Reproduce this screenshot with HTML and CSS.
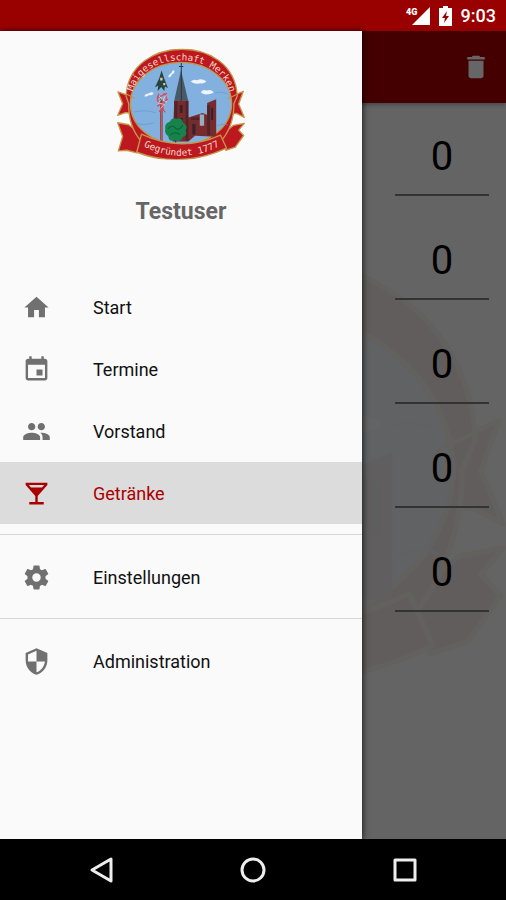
FILE: index.html
```
<!DOCTYPE html>
<html lang="de">
<head>
    <meta charset="UTF-8">
    <title>Maigesellschaft Merken</title>
    <meta name="viewport" content="width=device-width, initial-scale=1.0">
    <link rel="stylesheet" href="styles.css">
</head>
<body>
    <!-- Wappen, wird im Menü und als Hintergrund verwendet -->
    <svg class="defs" width="0" height="0" aria-hidden="true">
        <symbol id="wappen" viewBox="25 40 382 332">
            <g stroke="#c4964a" stroke-width="4" stroke-linejoin="round">
                <path fill="#bd1820" d="M28 170 L62 182 L72 232 L50 232 L27 240 L42 205Z"/>
                <path fill="#bd1820" d="M402 168 L370 182 L360 235 L382 234 L405 246 L388 206Z"/>
                <path fill="#bd1820" d="M27 262 L60 268 L100 300 L84 352 L54 344 L29 346 L42 303Z"/>
                <path fill="#bd1820" d="M405 264 L372 270 L335 300 L350 344 L378 335 L403 300 L388 284Z"/>
                <path fill="#bd1820" d="M52 182 C62 -2 374 -6 384 182 L374 205 C374 292 318 368 216 369 C112 368 58 290 60 205Z"/>
                <ellipse cx="216" cy="205" rx="151" ry="123" fill="#83b1df"/>
            </g>
            <g fill="#eef4fa">
                <path d="M106 183q5-10 14-8q8-7 14-2q-3 9-13 6q-7 6-15 4z"/>
                <path d="M178 126q2-11 9-12q2-9 9-9q2 10-7 12q-2 10-11 9z"/>
                <path d="M245 139q8-8 19-4q12-7 28 3q-8 9-19 6q-14 5-28-5z"/>
                <path d="M275 171q7-10 18-5q14-5 21 6q-10 6-20 5q-12 2-19-6z"/>
            </g>
            <path fill="none" stroke="#6598c7" stroke-width="2" d="M75 230q35-8 65 2M82 265q30 5 54-3M318 172q20-5 37 3M325 270q15-6 30-2"/>
            <path fill="#5d4738" d="M154 190h7v128h-7z"/>
            <path fill="none" stroke="#d94a57" stroke-width="4" d="M150 175q-10 20 3 29t-2 25M164 174q15 12 3 27t2 30M146 187l28-13M145 213l32-22M158 220v95"/>
            <path fill="none" stroke="#f6dfe3" stroke-width="2" d="M150 182l10 9-12 12 18 4-12 13M171 180l-9 15 12 6"/>
            <path fill="#28443c" d="M158 106 L166 130 L177 158 L168 154 L166 167 L157 155 L146 168 L148 151 L138 157 L151 129Z"/>
            <path fill="#d4d3bc" d="M154 128h7v8h-7zM163 143h6v7h-6z"/>
            <path fill="#772b2d" d="M196 195h42v51l43-13 13 6v-36l27-11v112l-63-3-20 17h-47z"/>
            <path fill="#4f2529" d="M196 197h9v113h-9zM230 197h8v118h-8zM294 210h9v89h-9zM246 246h35v8h-35z"/>
            <path fill="#495967" d="M216 105 L237 195 H196Z"/>
            <path fill="none" stroke="#293947" stroke-width="3" d="M217 84v113M210 94h13"/>
            <path fill="#32242a" d="M212 209h9v24h-9zM213 248h9v25h-9zM250 266h9v31h-9zM306 217h6v37h-6z"/>
            <path fill="#96afc1" d="M272 237h13v34h-13z"/>
            <path stroke="#4b302f" stroke-width="3" d="M200 290v32"/>
            <path fill="#16834d" d="M169 279q-3-15 14-21q7-14 21-8q16-3 18 12q16 9 8 22q7 14-8 20q-8 18-24 10q-18 7-20-12q-12-7-9-23z"/>
            <path fill="none" stroke="#096039" stroke-width="3" d="M177 280q12-14 22-3t23-8M184 299q13-13 29-2"/>
            <path fill="#bd1820" stroke="#c4964a" stroke-width="4" stroke-linejoin="round" d="M98 296 Q216 352 334 299 L352 338 Q216 400 84 350Z"/>
            <path fill="none" stroke="#c4964a" stroke-width="3" d="M54 177l24 12M355 191l28-14"/>
        </symbol>
    </svg>

    <header class="statusbar">
        <svg class="signal" width="24" height="20" viewBox="0 0 24 20" fill="#fff">
            <path d="M6 19L24 1v18z"/>
            <text class="network" x="0" y="9">4G</text>
        </svg>
        <svg width="13" height="20" viewBox="0 0 13 20" fill="#fff">
            <path fill-rule="evenodd" d="M4 0h5v2h4v18H0V2h4zM8 5L3 12h3l-1 5 5-7H7z"/>
        </svg>
        <span class="clock">9:03</span>
    </header>

    <div class="screen">
        <main class="page">
            <div class="toolbar">
                <button class="delete" type="button" aria-label="Löschen">
                    <svg width="30" height="30" viewBox="0 0 24 24"><path d="M6 19c0 1.1.9 2 2 2h8c1.1 0 2-.9 2-2V7H6v12zM19 4h-3.500l-1-1h-5l-1 1H5v2h14V4z"/></svg>
                </button>
            </div>
            <div class="drinks">
                <svg class="watermark" viewBox="0 0 382 332" aria-hidden="true"><use href="#wappen" width="382" height="332"/></svg>
                <input class="amount" type="text" inputmode="numeric" value="0" aria-label="Getränk 1">
                <input class="amount" type="text" inputmode="numeric" value="0" aria-label="Getränk 2">
                <input class="amount" type="text" inputmode="numeric" value="0" aria-label="Getränk 3">
                <input class="amount" type="text" inputmode="numeric" value="0" aria-label="Getränk 4">
                <input class="amount" type="text" inputmode="numeric" value="0" aria-label="Getränk 5">
            </div>
        </main>

        <div class="scrim"></div>

        <aside class="drawer">
            <div class="profile">
                <svg class="logo" viewBox="25 40 382 332">
                    <use href="#wappen" x="25" y="40" width="382" height="332"/>
                    <path id="arc-top" fill="none" d="M69 190 C82 38 350 36 365 192"/>
                    <path id="arc-bottom" fill="none" d="M90 324 Q216 397 346 324"/>
                    <text class="wappen-text"><textPath href="#arc-top" startOffset="50%">Maigesellschaft Merken</textPath></text>
                    <text class="wappen-text"><textPath href="#arc-bottom" startOffset="50%">Gegründet 1777</textPath></text>
                </svg>
                <h1 class="username">Testuser</h1>
            </div>
            <nav class="menu">
                <a class="item" href="#start">
                    <svg class="icon" viewBox="0 0 24 24"><path d="M10 20v-6h4v6h5v-8h3L12 3 2 12h3v8z"/></svg>
                    Start
                </a>
                <a class="item" href="#termine">
                    <svg class="icon" viewBox="0 0 24 24"><path d="M17 12h-5v5h5v-5zM16 1v2H8V1H6v2H5c-1.110 0-1.990.9-1.990 2L3 19c0 1.100.890 2 2 2h14c1.100 0 2-.9 2-2V5c0-1.100-.9-2-2-2h-1V1h-2zm3 18H5V8h14v11z"/></svg>
                    Termine
                </a>
                <a class="item" href="#vorstand">
                    <svg class="icon" viewBox="0 0 24 24"><path d="M16 11c1.660 0 2.990-1.340 2.990-3S17.660 5 16 5c-1.660 0-3 1.340-3 3s1.340 3 3 3zm-8 0c1.660 0 2.990-1.340 2.990-3S9.660 5 8 5C6.340 5 5 6.340 5 8s1.340 3 3 3zm0 2c-2.330 0-7 1.170-7 3.500V19h14v-2.500c0-2.330-4.670-3.500-7-3.500zm8 0c-.290 0-.620.020-.970.050 1.160.840 1.970 1.970 1.970 3.450V19h6v-2.500c0-2.330-4.670-3.500-7-3.500z"/></svg>
                    Vorstand
                </a>
                <a class="item active" href="#getraenke">
                    <svg class="icon" viewBox="0 0 24 24"><path d="M21 5V3H3v2l8 9v5H6v2h12v-2h-5v-5l8-9zM7.430 7L5.660 5h12.690l-1.780 2H7.430z"/></svg>
                    Getränke
                </a>
                <hr class="divider">
                <a class="item" href="#einstellungen">
                    <svg class="icon" viewBox="0 0 24 24"><path d="M19.430 12.980c.040-.320.070-.640.070-.980s-.030-.660-.070-.980l2.110-1.650c.190-.150.240-.420.120-.640l-2-3.460c-.120-.220-.390-.300-.610-.220l-2.490 1c-.520-.400-1.080-.730-1.690-.980l-.380-2.650C14.460 2.180 14.250 2 14 2h-4c-.250 0-.460.180-.490.420l-.380 2.650c-.610.250-1.170.590-1.690.980l-2.490-1c-.230-.090-.490 0-.610.220l-2 3.460c-.130.220-.070.490.120.640l2.110 1.650c-.040.320-.070.650-.070.980s.030.660.070.980l-2.110 1.650c-.190.150-.240.420-.120.640l2 3.460c.120.220.390.300.610.220l2.490-1c.520.400 1.080.730 1.690.980l.380 2.650c.030.240.240.420.490.420h4c.250 0 .460-.180.490-.420l.380-2.650c.610-.250 1.170-.590 1.690-.980l2.490 1c.230.090.490 0 .610-.220l2-3.460c.120-.220.070-.490-.120-.640l-2.110-1.650zM12 15.500c-1.930 0-3.500-1.570-3.500-3.500s1.570-3.500 3.500-3.500 3.500 1.570 3.500 3.500-1.570 3.500-3.500 3.500z"/></svg>
                    Einstellungen
                </a>
                <hr class="divider">
                <a class="item" href="#administration">
                    <svg class="icon" viewBox="0 0 24 24"><path d="M12 1L3 5v6c0 5.550 3.840 10.740 9 12 5.160-1.260 9-6.450 9-12V5l-9-4zm0 10.990h7c-.530 4.120-3.280 7.790-7 8.940V12H5V6.300l7-3.110v8.800z"/></svg>
                    Administration
                </a>
            </nav>
        </aside>
    </div>

    <footer class="navbar">
        <button class="key" type="button" aria-label="Zurück">
            <svg width="28" height="28" viewBox="0 0 28 28"><path d="M24 3v22L5 14z"/></svg>
        </button>
        <button class="key" type="button" aria-label="Home">
            <svg width="28" height="28" viewBox="0 0 28 28"><circle cx="14" cy="14" r="11"/></svg>
        </button>
        <button class="key" type="button" aria-label="Übersicht">
            <svg width="28" height="28" viewBox="0 0 28 28"><rect x="4" y="4" width="20" height="20"/></svg>
        </button>
    </footer>
</body>
</html>
```
FILE: styles.css
```
:root {
    --primary: #ab0000;
    --primary-dark: #990000;
    --background: #fafafa;
    --icon-color: #707070;
}

* {
    margin: 0;
    padding: 0;
    box-sizing: border-box;
}

body, input, button {
    font-family: Roboto, sans-serif;
}

body {
    background-color: #000;
    min-height: 100vh;
    display: flex;
    flex-direction: column;
}

button {
    background: none;
    border: none;
    cursor: pointer;
}

.defs {
    position: absolute;
}

/* Statusleiste */
.statusbar {
    background-color: var(--primary-dark);
    height: 31px;
    padding: 0 10px;
    display: flex;
    align-items: center;
    justify-content: flex-end;
    gap: 9px;
}

.network {
    font-size: 9px;
    font-weight: 900;
}

.clock {
    color: #fff;
    font-size: 18px;
    font-weight: 500;
}

/* Inhalt */
.screen {
    position: relative;
    flex: 1;
    display: flex;
}

.page {
    flex: 1;
    display: flex;
    flex-direction: column;
    background-color: var(--background);
}

.toolbar {
    background-color: var(--primary);
    height: 72px;
    padding: 0 15px;
    display: flex;
    align-items: center;
    justify-content: flex-end;
    box-shadow: 0 2px 4px rgba(0, 0, 0, 0.3);
}

.delete svg {
    display: block;
    fill: #fff;
}

.drinks {
    position: relative;
    flex: 1;
    display: flex;
    flex-direction: column;
    align-items: flex-end;
    gap: 26px;
    padding: 15px 17px;
}

.watermark {
    position: absolute;
    inset: 0;
    width: 100%;
    height: 100%;
    opacity: 0.07;
}

.amount {
    position: relative;
    width: 94px;
    height: 78px;
    background: none;
    border: none;
    border-bottom: 2px solid #808080;
    color: #000;
    font-size: 40px;
    text-align: center;
    outline: none;
}

.scrim {
    position: absolute;
    inset: 0;
    background-color: rgba(0, 0, 0, 0.6);
}

/* Menü */
.drawer {
    position: absolute;
    top: 0;
    bottom: 0;
    left: 0;
    width: calc(100% - 144px);
    max-width: 400px;
    background-color: var(--background);
    box-shadow: 1px 0 6px rgba(0, 0, 0, 0.7);
}

.profile {
    height: 245px;
    padding-top: 17px;
    display: flex;
    flex-direction: column;
    align-items: center;
    gap: 39px;
}

.logo {
    width: 128px;
    height: 112px;
}

.wappen-text {
    fill: #f3d9c4;
    font-family: "DejaVu Sans Mono", monospace;
    font-size: 28px;
    text-anchor: middle;
}

.username {
    color: #666;
    font-size: 23px;
    font-weight: 700;
    line-height: 26px;
}

.item {
    display: flex;
    align-items: center;
    gap: 42px;
    height: 62px;
    padding: 0 22px;
    color: #111;
    font-size: 18px;
    text-decoration: none;
}

.icon {
    width: 29px;
    height: 29px;
    fill: var(--icon-color);
}

.item.active {
    background-color: #dcdcdc;
    color: var(--primary);
}

.item.active .icon {
    fill: var(--primary);
}

.divider {
    border: none;
    border-top: 1px solid #d5d5d5;
    margin: 10px 0 11px;
}

/* Navigationsleiste */
.navbar {
    background-color: #000;
    height: 61px;
    padding: 0 5%;
    display: flex;
}

.key {
    flex: 1;
    display: flex;
    align-items: center;
    justify-content: center;
}

.key svg {
    fill: none;
    stroke: #eee;
    stroke-width: 3px;
    stroke-linejoin: round;
}
```
